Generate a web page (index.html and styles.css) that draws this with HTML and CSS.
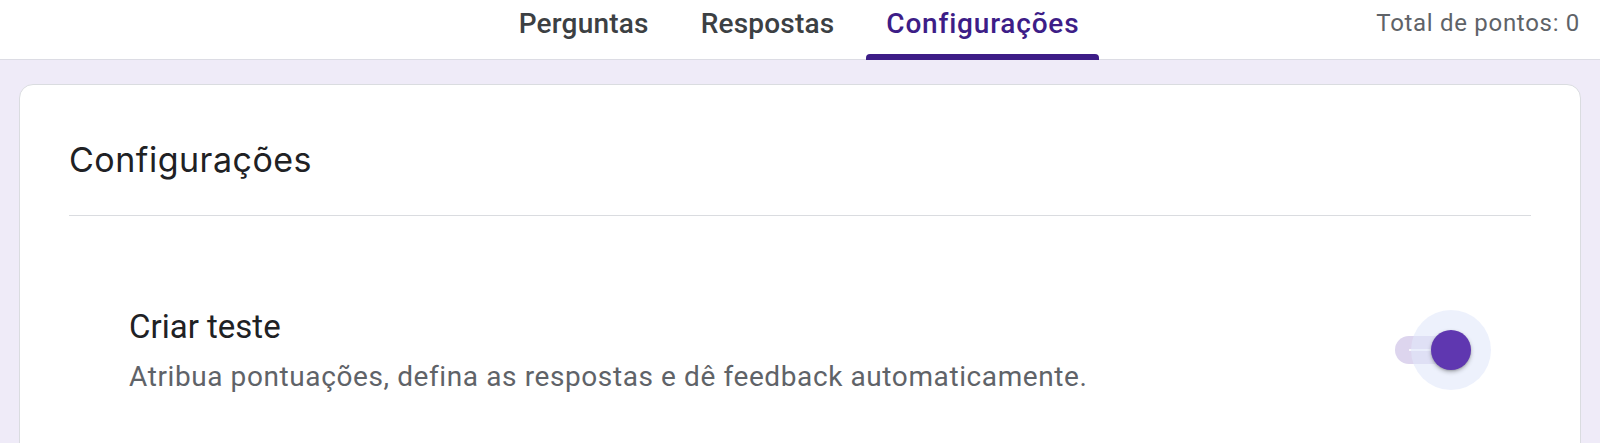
FILE: index.html
```html
<!DOCTYPE html>
<html lang="pt-BR">
<head>
<meta charset="utf-8">
<title>Configurações</title>
<link rel="stylesheet" href="styles.css">
</head>
<body>
<header class="topbar">
  <div class="spacer"></div>
  <nav class="tabs">
    <div class="tab">Perguntas</div>
    <div class="tab">Respostas</div>
    <div class="tab active">Configurações</div>
  </nav>
  <div class="total">Total de pontos: 0</div>
</header>
<main class="page">
  <section class="card">
    <h1 class="card-title">Configurações</h1>
    <div class="divider"></div>
    <div class="setting">
      <div class="setting-text">
        <div class="setting-title">Criar teste</div>
        <div class="setting-desc">Atribua pontuações, defina as respostas e dê feedback automaticamente.</div>
      </div>
      <div class="toggle">
        <div class="track"><span class="track-line"></span></div>
        <div class="halo"><span class="thumb"></span></div>
      </div>
    </div>
  </section>
</main>
</body>
</html>
```

FILE: styles.css
```css
* { box-sizing: border-box; }
html, body { margin: 0; padding: 0; }
body {
  background: #efebf8;
  font-family: Roboto, "Liberation Sans", sans-serif;
  height: 443px;
  overflow: hidden;
}
.topbar {
  height: 60px;
  background: #fff;
  border-bottom: 1px solid #dcdce4;
  display: grid;
  grid-template-columns: 1fr auto 1fr;
  align-items: stretch;
}
.tabs {
  display: flex;
  gap: 12px;
  transform: translateX(-1px);
}
.tab {
  position: relative;
  padding: 7px 20px 0;
  font-size: 28px;
  font-weight: 500;
  line-height: 34px;
  letter-spacing: 0.2px;
  color: #3c4043;
}
.tab.active {
  color: #3d1d87;
  letter-spacing: 0.8px;
}
.tab.active::after {
  content: "";
  position: absolute;
  left: 0; right: 0; bottom: -1px;
  height: 6px;
  background: #3d1d87;
  border-radius: 4px 4px 0 0;
}
.total {
  justify-self: end;
  padding: 8px 20px 0 0;
  font-size: 24px;
  line-height: 30px;
  color: #5f6368;
  letter-spacing: 0.7px;
}
.page {
  padding: 24px 19px 0;
  height: 383px;
  overflow: hidden;
}
.card {
  background: #fff;
  border: 1px solid #dadce0;
  border-radius: 14px;
  padding: 55px 49px 40px;
  height: 400px;
}
.card-title {
  margin: 0;
  font-family: Inter, "Open Sans", sans-serif;
  font-weight: 400;
  font-size: 34px;
  line-height: 40px;
  letter-spacing: 0.5px;
  color: #202124;
}
.divider {
  margin-top: 35px;
  height: 1px;
  background: #dadce0;
}
.setting {
  display: flex;
  align-items: center;
  justify-content: space-between;
  padding: 91px 40px 0 60px;
}
.setting-title {
  font-size: 33px;
  line-height: 40px;
  color: #202124;
}
.setting-desc {
  margin-top: 12px;
  font-size: 28px;
  line-height: 36px;
  letter-spacing: 0.6px;
  color: #5f6368;
}
.toggle {
  position: relative;
  width: 96px;
  height: 80px;
  flex: none;
  margin-top: -2px;
}
.track {
  position: absolute;
  left: 0; top: 26px;
  width: 70px; height: 28px;
  border-radius: 14px;
  background: #ddd5ee;
}
.track-line {
  position: absolute;
  left: 14px; top: 13px;
  width: 24px; height: 2px;
  background: rgba(255,255,255,0.8);
}
.halo {
  position: absolute;
  right: 0; top: 0;
  width: 80px; height: 80px;
  border-radius: 50%;
  background: rgba(225, 232, 250, 0.6);
  display: flex;
  align-items: center;
  justify-content: center;
}
.thumb {
  width: 40px; height: 40px;
  border-radius: 50%;
  background: #5f37b0;
  box-shadow: 0 2px 4px rgba(0,0,0,0.25), 0 1px 2px rgba(0,0,0,0.15);
}
```
